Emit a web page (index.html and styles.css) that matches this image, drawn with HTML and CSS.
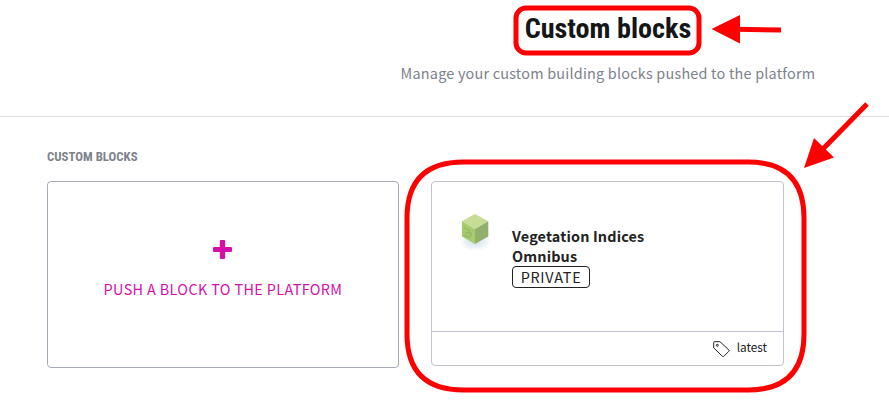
FILE: index.html
```
<!DOCTYPE html>
<html lang="en">
<head>
<meta charset="utf-8">
<title>Custom blocks</title>
<link rel="stylesheet" href="styles.css">
</head>
<body>
<header class="header">
  <h1 class="title">Custom blocks</h1>
  <p class="subtitle">Manage your custom building blocks pushed to the platform</p>
</header>
<main class="content">
  <h2 class="section-title">CUSTOM BLOCKS</h2>
  <div class="cards">
    <a class="card push-card">
      <svg class="plus" width="19" height="19" viewBox="0 0 19 19"><path d="M8 0h3q1.200 0 1.200 1.200V7h5.600q1.200 0 1.200 1.200v2.600q0 1.200-1.200 1.200h-5.600v5.800q0 1.200-1.200 1.200H8q-1.200 0-1.200-1.200V12H1.200Q0 12 0 10.800V8.200Q0 7 1.200 7h5.600V1.200Q6.800 0 8 0z"/></svg>
      <span class="push-label">PUSH A BLOCK TO THE PLATFORM</span>
    </a>
    <article class="card block-card">
      <div class="block-body">
        <svg class="cube" width="36" height="44" viewBox="0 0 36 44">
          <defs><radialGradient id="shade"><stop offset="0" stop-color="#d5e3e9"/><stop offset=".5" stop-color="#e6eff3"/><stop offset="1" stop-color="#fff"/></radialGradient></defs>
          <ellipse cx="18" cy="32" rx="16" ry="9" fill="url(#shade)"/>
          <path d="M18 4l13.300 7.300L18 19 4.900 11.300z" fill="#c7dc94"/>
          <path d="M4.900 11.300L18 19v15L4.900 26.500z" fill="#a7cb6e"/>
          <path d="M31.300 11.300L18 19v15l13.300-7.500z" fill="#91b06c"/>
          <path d="M7 17.500l5.500 3.200v2l-3 .5M7 25l5 2.500 1.500-1.500M8 22l2.500 1.500M14 22.500v3.500" fill="none" stroke="#94b864" stroke-width="1.400"/>
        </svg>
        <div class="block-info">
          <h3 class="block-name">Vegetation Indices<br>Omnibus</h3>
          <span class="badge">PRIVATE</span>
        </div>
      </div>
      <footer class="block-footer">
        <svg class="tag" width="17" height="17" viewBox="0 0 17 17"><path d="M.7 1.700q0-1 1-1h5.200l8.900 8.200q.7.700 0 1.400l-5 5q-.7.700-1.400 0L.7 6.900z"/><circle cx="4.300" cy="4.300" r="1"/></svg>
        <span class="version">latest</span>
      </footer>
    </article>
  </div>
</main>
<svg class="annotations" width="889" height="409" viewBox="0 0 889 409">
  <rect x="516" y="8" width="183" height="45" rx="10"/>
  <path d="M781 30l-45-.7"/>
  <path class="head" d="M711.500 29l28.500-14v28.500z"/>
  <path d="M867 104l-46 47"/>
  <path class="head" d="M804 168l10-30 20 19.500z"/>
  <path d="M463.500 162H748Q804 162 804 218V334Q804 390 748 390H463.500Q407 390 407 334V218Q407 162 463.500 162z"/>
</svg>
</body>
</html>
```
FILE: styles.css
```
* { box-sizing: border-box; }
html, body { margin: 0; width: 889px; height: 409px; overflow: hidden; }
body {
  position: relative;
  background: #fff;
  color: #222;
  font-family: "Noto Sans CJK SC", "Noto Sans", sans-serif;
}
h1, h2, h3, p { margin: 0; }
.header {
  height: 117px;
  padding: 9px 0 0 327px;
  border-bottom: 1px solid #dcdde3;
  text-align: center;
}
.title {
  height: 40px;
  font: 700 28.200px/40px "Roboto Condensed", Roboto, sans-serif;
  font-stretch: 75%;
  color: #151618;
}
.subtitle {
  margin-top: 14px;
  font-size: 14.400px;
  line-height: 20px;
  letter-spacing: .22px;
  color: #7c828c;
}
.content { padding: 32px 0 0 47px; }
.section-title {
  height: 16px;
  font: 700 12.800px/16px "Roboto Condensed", Roboto, sans-serif;
  font-stretch: 75%;
  color: #7c828c;
}
.cards {
  display: flex;
  align-items: flex-start;
  gap: 32px;
  margin-top: 16px;
}
.card { border: 1px solid #c0c3cf; border-radius: 4px; }
.push-card {
  display: flex;
  flex-direction: column;
  align-items: center;
  width: 352px;
  height: 187px;
  padding-top: 58px;
  border-color: #a5abb6;
  color: #d40fab;
}
.plus { margin-right: 1px; fill: #d40fab; }
.push-label { margin-top: 20px; font-size: 14.400px; line-height: 20px; letter-spacing: .37px; }
.block-card { width: 353px; height: 185px; }
.block-body { display: flex; height: 149px; padding: 28px 0 0 25px; }
.cube { flex: none; }
.block-info { margin: 16px 0 0 19px; }
.block-name { font-size: 14.400px; font-weight: 700; line-height: 20px; letter-spacing: .16px; }
.badge {
  display: block;
  width: 78px;
  height: 22px;
  border: 1px solid #222;
  border-radius: 4px;
  font-size: 14.400px;
  line-height: 20px;
  letter-spacing: .75px;
  text-align: center;
}
.block-footer {
  display: flex;
  justify-content: flex-end;
  height: 34px;
  padding: 9px 16px 0 0;
  border-top: 1px solid #c0c3cf;
}
.tag { fill: none; stroke: #222; stroke-width: 1; }
.version { margin: -4px 0 0 7px; font-size: 11.800px; line-height: 20px; }
.annotations {
  position: absolute;
  inset: 0;
  fill: none;
  stroke: #f00;
  stroke-width: 5;
  pointer-events: none;
}
.head { fill: #f00; stroke: none; }
```
